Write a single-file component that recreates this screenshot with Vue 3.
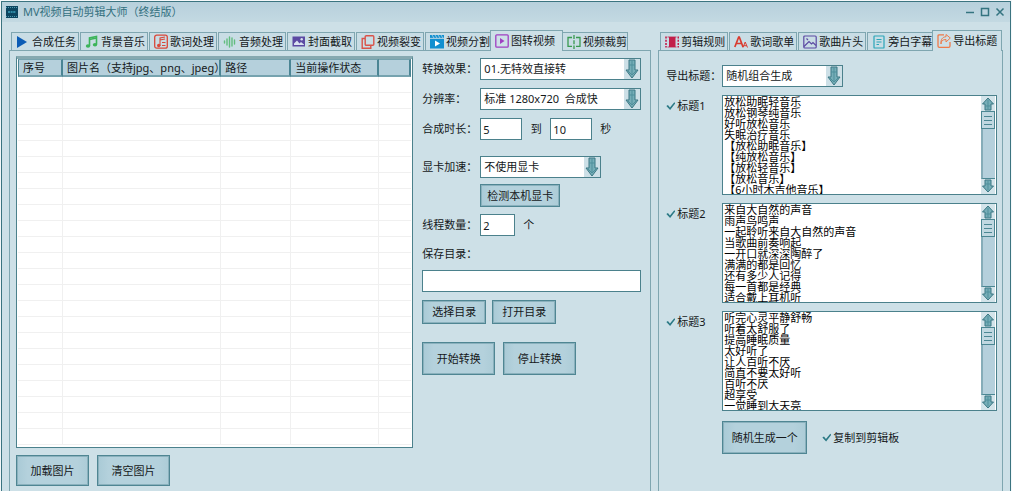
<script setup>
import { ref } from 'vue'

const leftTabs = [
  { name: '合成任务', icon: 'play' },
  { name: '背景音乐', icon: 'music' },
  { name: '歌词处理', icon: 'lyric' },
  { name: '音频处理', icon: 'audio' },
  { name: '封面截取', icon: 'cover' },
  { name: '视频裂变', icon: 'copy' },
  { name: '视频分割', icon: 'split' },
  { name: '图转视频', icon: 'convert' },
  { name: '视频裁剪', icon: 'crop' }
]
const rightTabs = [
  { name: '剪辑规则', icon: 'rule' },
  { name: '歌词歌单', icon: 'letters' },
  { name: '歌曲片头', icon: 'intro' },
  { name: '旁白字幕', icon: 'caption' },
  { name: '导出标题', icon: 'export' }
]
const icons = {
  play: '<path d="M1 2v12l10-6z" fill="#0b5cb5"/>',
  music: '<path d="M4.500 12V4l7-1.500v8" fill="none" stroke="#3cb45a" stroke-width="1.6"/><path d="M4.500 5.500l7-1.500" stroke="#3cb45a" stroke-width="1.500"/><ellipse cx="3" cy="12" rx="2.200" ry="1.800" fill="#3cb45a"/><ellipse cx="10" cy="10.800" rx="2.200" ry="1.800" fill="#3cb45a"/>',
  lyric: '<g fill="none" stroke="#d9483b"><rect x=".7" y="1.200" width="12.600" height="13" rx="2" stroke-width="1.300"/><path d="M6 12V4l5-1M6 6l5-1M8 8.500h3.500M8 11.500h3.500" stroke-width="1.100"/></g><circle cx="4.700" cy="11.500" r="1.700" fill="#d9483b"/>',
  audio: '<g stroke="#62bd7e" stroke-width="1.400" stroke-linecap="round"><path d="M1.500 7v2M4 5v6M6.500 3v10M9 4v8M11.500 6v4"/></g>',
  cover: '<rect x=".5" y="2.500" width="12.500" height="10" fill="#5c4aa3"/><path d="M2 11V9.500l3-3 2.500 3L9 8l3 2.500v.5z" fill="#d9e2f0"/><circle cx="9.700" cy="5.300" r="1.200" fill="#d9e2f0"/>',
  copy: '<g fill="none" stroke="#d9534a" stroke-width="1.400"><rect x="4.200" y="1.700" width="8.600" height="9.600" rx="1"/><path d="M4 4.500H1.200v9.800h8.600v-3"/></g>',
  split: '<rect x="0" y="4.500" width="14" height="10" fill="#108fd0"/><path d="M0 1h14v3H0z" fill="#108fd0"/><path d="M2 1l2 3M5 1l2 3M8 1l2 3M11 1l2 3M0 4.300h14" stroke="#cde0e7" stroke-width=".7"/><path d="M5 6.500v6l5-3z" fill="#fff"/>',
  convert: '<rect x=".8" y="1.800" width="12.400" height="12.400" rx="1" fill="none" stroke="#a03fc2" stroke-width="1.300"/><path d="M5 5v6l4.500-3z" fill="#a03fc2"/>',
  crop: '<g fill="none" stroke="#3a9a50" stroke-width="1.300"><path d="M5 3.500H1v8.800h4M9 3.500h4v8.800H9"/><path d="M7 1v14" stroke-dasharray="4 1.300"/></g>',
  rule: '<rect x="4" y="3" width="6.500" height="10" fill="#c21f4a"/><path d="M1 2.500v11M13.300 2.500v11" stroke="#c21f4a" stroke-width="1.600" stroke-dasharray="2 1.200"/><path d="M2.500 3h9M2.500 13h9" stroke="#c21f4a" stroke-width=".8"/>',
  letters: '<g fill="none" stroke="#d93a2e"><path d="M.8 13L4.700 3h.6L9 13M2.200 9.500h5.500" stroke-width="1.700"/><path d="M9 13.500l2.200-5.500 2.300 5.500M9.800 11.700h2.900" stroke-width="1"/></g>',
  intro: '<g fill="none" stroke="#5c4aa3" stroke-width="1.200"><rect x=".8" y="2" width="12.400" height="12" rx="1"/><path d="M1 12.500l5-5 2.500 2.500L10 8.500l3 3M3.500 4.500l1.500 1.500"/></g>',
  caption: '<g fill="none" stroke="#2aa5b8" stroke-width="1.200"><rect x="2" y="2" width="10" height="12" rx=".6"/><path d="M4.500 5.500h5M4.500 8h5M4.500 10.500h2.500"/></g>',
  export: '<g fill="none" stroke="#ee7a4a" stroke-width="1.300"><path d="M7 1.800H2.300Q1 1.800 1 3v10q0 1.300 1.300 1.300h9.400q1.300 0 1.300-1.300V9"/><path d="M4 11c0-3 1.500-4.500 5-4.500v2.500l4.300-4L9 1.500v2.200C5.500 4 3.500 6.500 4 11z" stroke-width="1"/></g>'
}

const columns = ['序号', '图片名（支持jpg、png、jpeg）', '路径', '当前操作状态', '']
const rowCount = 23

const effect = ref('01.无特效直接转')
const resolution = ref('1280x720')
const from = ref('5')
const to = ref('10')
const gpu = ref('不使用显卡')
const threads = ref('2')
const folder = ref('')
const mode = ref('随机组合生成')
const copyToClipboard = ref(true)

const titles = ref([
  {
    label: '标题1', on: true,
    text: '放松助眠轻音乐\n放松钢琴纯音乐\n好听放松音乐\n失眠治疗音乐\n【放松助眠音乐】\n【纯放松音乐】\n【放松轻音乐】\n【放松音乐】\n【6小时木吉他音乐】'
  },
  {
    label: '标题2', on: true,
    text: '来自大自然的声音\n雨声鸟鸣声\n一起聆听来自大自然的声音\n当歌曲前奏响起\n一开口就深深陶醉了\n满满的都是回忆\n还有多少人记得\n每一首都是经典\n适合戴上耳机听'
  },
  {
    label: '标题3', on: true,
    text: '听完心灵平静舒畅\n听着太舒服了\n提高睡眠质量\n太好听了\n让人百听不厌\n简直不要太好听\n百听不厌\n超享受\n一觉睡到大天亮'
  }
])
</script>

<template>
  <div class="window">
    <header class="titlebar">
      <svg class="logo" viewBox="0 0 12 12" aria-hidden="true">
        <rect width="12" height="12" fill="#0d4560" />
        <path d="M0 1.500h12M0 10.500h12" stroke="#4f9ab0" stroke-dasharray="1 1" />
        <path d="M2 6h8" stroke="#2f8aa5" stroke-width="2" stroke-dasharray="2 .6" />
      </svg>
      <h1>MV视频自动剪辑大师（终结版）</h1>
      <div class="controls">
        <button type="button" aria-label="最小化"><svg viewBox="0 0 10 10"><path d="M1 5.500h8" /></svg></button>
        <button type="button" aria-label="最大化"><svg viewBox="0 0 10 10"><path d="M1.500 1.500h7v7h-7z" /></svg></button>
        <button type="button" aria-label="关闭"><svg viewBox="0 0 10 10"><path d="M1.500 1.500l7 7M8.500 1.500l-7 7" /></svg></button>
      </div>
    </header>

    <main class="body">
      <section class="side">
        <nav class="tabs">
          <button v-for="tab in leftTabs" :key="tab.name" type="button" class="tab" :class="{ active: tab.icon === 'convert' }">
            <svg viewBox="0 0 14 16" aria-hidden="true" v-html="icons[tab.icon]"></svg>
            <span>{{ tab.name }}</span>
          </button>
        </nav>
        <div class="panel convert">
          <div class="files">
            <div class="grid">
              <table>
                <colgroup>
                  <col class="c-no"><col><col class="c-path"><col class="c-state"><col class="c-end">
                </colgroup>
                <thead>
                  <tr><th v-for="(c, i) in columns" :key="i">{{ c }}</th></tr>
                </thead>
                <tbody>
                  <tr v-for="r in rowCount" :key="r"><td v-for="(c, i) in columns" :key="i"></td></tr>
                </tbody>
              </table>
            </div>
            <div class="actions wide">
              <button type="button" class="btn">加载图片</button>
              <button type="button" class="btn">清空图片</button>
            </div>
          </div>

          <form class="form" @submit.prevent>
            <div class="row">
              <label for="effect">转换效果：</label>
              <div class="select">
                <select id="effect" v-model="effect"><option>01.无特效直接转</option></select>
                <svg viewBox="0 0 14 20" aria-hidden="true"><path d="M4 1h6v10h3L7 19 1 11h3z" /><path d="M7 2v14M4 6h6M3 12l4 4 4-4" /></svg>
              </div>
            </div>
            <div class="row">
              <label for="resolution">分辨率：</label>
              <div class="select">
                <select id="resolution" v-model="resolution"><option value="1280x720">标准 1280x720 &nbsp;合成快</option></select>
                <svg viewBox="0 0 14 20" aria-hidden="true"><path d="M4 1h6v10h3L7 19 1 11h3z" /><path d="M7 2v14M4 6h6M3 12l4 4 4-4" /></svg>
              </div>
            </div>
            <div class="row">
              <label for="from">合成时长：</label>
              <input id="from" v-model="from" class="field mid" type="text">
              <label for="to" class="word">到</label>
              <input id="to" v-model="to" class="field mid" type="text">
              <span class="unit">秒</span>
            </div>
            <div class="row gpu">
              <label for="gpu">显卡加速：</label>
              <div class="select short">
                <select id="gpu" v-model="gpu"><option>不使用显卡</option></select>
                <svg viewBox="0 0 14 20" aria-hidden="true"><path d="M4 1h6v10h3L7 19 1 11h3z" /><path d="M7 2v14M4 6h6M3 12l4 4 4-4" /></svg>
              </div>
            </div>
            <button type="button" class="btn detect">检测本机显卡</button>
            <div class="row threads">
              <label for="threads">线程数量：</label>
              <input id="threads" v-model="threads" class="field small" type="text">
              <span class="unit">个</span>
            </div>
            <label for="folder" class="folder-label">保存目录：</label>
            <input id="folder" v-model="folder" class="field" type="text">
            <div class="actions folder-actions">
              <button type="button" class="btn">选择目录</button>
              <button type="button" class="btn">打开目录</button>
            </div>
            <div class="actions run">
              <button type="button" class="btn">开始转换</button>
              <button type="button" class="btn">停止转换</button>
            </div>
          </form>
        </div>
      </section>

      <section class="side">
        <nav class="tabs">
          <button v-for="tab in rightTabs" :key="tab.name" type="button" class="tab" :class="{ active: tab.icon === 'export' }">
            <svg viewBox="0 0 14 16" aria-hidden="true" v-html="icons[tab.icon]"></svg>
            <span>{{ tab.name }}</span>
          </button>
        </nav>
        <div class="panel titles">
          <div class="line">
            <label for="mode" class="mode-label">导出标题：</label>
            <div class="select short">
              <select id="mode" v-model="mode"><option>随机组合生成</option></select>
              <svg viewBox="0 0 14 20" aria-hidden="true"><path d="M4 1h6v10h3L7 19 1 11h3z" /><path d="M7 2v14M4 6h6M3 12l4 4 4-4" /></svg>
            </div>
          </div>
          <div v-for="t in titles" :key="t.label" class="line">
            <label class="check"><input v-model="t.on" type="checkbox">{{ t.label }}</label>
            <div class="memo">
              <textarea v-model="t.text" :aria-label="t.label" spellcheck="false"></textarea>
              <div class="scroll" aria-hidden="true">
                <svg viewBox="0 0 14 14"><path d="M7 1l5.500 6H10v6H4V7H1.500z" /><path d="M7 3v9M4 9h6" /></svg>
                <div class="thumb"><i></i><i></i><i></i></div>
                <div class="track"></div>
                <svg viewBox="0 0 14 14"><path d="M7 13l5.500-6H10V1H4v6H1.500z" /><path d="M7 11V2M4 5h6" /></svg>
              </div>
            </div>
          </div>
          <div class="line generate">
            <button type="button" class="btn">随机生成一个</button>
            <label class="check"><input v-model="copyToClipboard" type="checkbox">复制到剪辑板</label>
          </div>
        </div>
      </section>
    </main>
  </div>
</template>

<style>
body { margin: 0; background: #f4f8fa; }
</style>

<style scoped>
* { box-sizing: border-box; }
.window {
  --edge: #4b818c;
  --soft: #7fa6b0;
  --bg: #cde0e7;
  display: flex;
  flex-direction: column;
  min-height: calc(100vh - 1px);
  margin: 1px 1px 0;
  border: 1px solid #3b7480;
  border-bottom: 0;
  background: var(--bg);
  color: #14181a;
  font: 11px/16px "Noto Sans", "Noto Sans CJK SC", sans-serif;
}
button, input, select, textarea { font: inherit; color: inherit; margin: 0; }

.titlebar {
  display: flex;
  align-items: center;
  height: 20px;
  padding: 0 5px 0 4px;
  background: linear-gradient(#b7d0dc, #c3d9e2);
}
.logo { width: 12px; height: 12px; }
h1 { flex: 1; margin: 0 0 0 5px; color: #33707e; font: inherit; }
.controls { display: flex; gap: 5px; }
.controls button { width: 10px; height: 10px; padding: 0; border: 0; background: none; }
.controls svg { display: block; width: 10px; height: 10px; fill: none; stroke: #347480; stroke-width: 1.5; }

.body {
  flex: 1;
  display: grid;
  grid-template-columns: 643fr 345fr;
  gap: 7px;
  padding: 8px 7px 0;
}
.side { display: flex; flex-direction: column; min-width: 0; }
.tabs { display: flex; align-items: flex-end; gap: 1px; height: 20px; padding: 0 0 0 2px; }
.tab {
  display: flex;
  align-items: center;
  gap: 2px;
  width: 68px;
  height: 18px;
  padding: 0 0 0 4px;
  border: 1px solid var(--soft);
  border-bottom: 0;
  background: #c9dde5;
  white-space: nowrap;
}
.tab svg { flex: none; width: 14px; height: 16px; }
.tab.active {
  position: relative;
  width: 73px;
  height: 21px;
  margin: 0 -2px -1px -4px;
  padding-bottom: 1px;
  background: var(--bg);
}
.tab:last-child { width: 66px; }
.tab.active:last-child { width: 70px; margin-right: 0; }
.panel { flex: 1; border: 1px solid var(--soft); border-bottom: 0; }

.convert { display: flex; gap: 9px; padding: 5px 9px 0 6px; }
.files { flex: 1; min-width: 0; }
.grid { border: 1px solid var(--edge); border-top: 3px solid #86a9b1; background: #fff; padding: 0 1px 2px; }
table { width: 100%; border-collapse: separate; border-spacing: 0; table-layout: fixed; }
.c-no { width: 45px; }
.c-path { width: 70px; }
.c-state { width: 88px; }
.c-end { width: 32px; }
th {
  height: 18px;
  padding: 0 0 0 4px;
  border: 1px solid #76a3af;
  border-width: 1px 2px 2px 0;
  border-color: #76a3af #4b8594;
  background: #b5d0dc;
  font-weight: 400;
  line-height: 15px;
  text-align: left;
  white-space: nowrap;
}
th:first-child { border-left-width: 1px; }
td { height: 16px; padding: 0; border: 1px solid #f0f0f0; border-width: 0 1px 1px 0; }
td:last-child { border-right: 0; }

.btn {
  padding: 0;
  border: 1px solid #4f8693;
  box-shadow: inset 0 0 0 1px #8ab1bd;
  background: linear-gradient(90deg, #a9cad6, #b4d1dc 15%, #b4d1dc 85%, #acccd7);
}
.actions { display: flex; }
.wide { gap: 8px; margin-top: 7px; }
.wide .btn { width: 73px; height: 31px; }

.form { display: flex; flex-direction: column; width: 219px; padding-top: 2px; }
.row { display: flex; align-items: center; height: 22px; margin-bottom: 8px; }
.row > label:first-child { width: 58px; flex: none; white-space: nowrap; }
.select { position: relative; flex: 1; height: 22px; }
.select.short { flex: none; width: 121px; }
.select select {
  appearance: none;
  display: block;
  width: 100%;
  height: 100%;
  padding: 0 18px 0 3px;
  border: 1px solid var(--edge);
  border-radius: 0;
  background: linear-gradient(#cde0e7, #cde0e7) right center / 16px 100% no-repeat #fff;
}
.select svg { position: absolute; top: 1px; right: 2px; width: 14px; height: 20px; pointer-events: none; }
.select svg path, .scroll svg path { fill: #76aeb8; stroke: #3a7783; }
.select svg path + path, .scroll svg path + path { fill: none; stroke: #4f8f9b; }
.field { width: 100%; height: 22px; padding: 0 2px; border: 1px solid var(--edge); border-radius: 0; background: #fff; }
.mid { width: 42px; }
.small { width: 35px; }
.word { width: 28px; text-align: center; }
.unit { margin-left: 8px; }
.gpu { margin: 8px 0 6px; }
.detect { width: 80px; height: 23px; margin: 0 0 7px 58px; }
.folder-label { margin: 2px 0 8px; }
.folder-actions { gap: 6px; margin-top: 8px; }
.folder-actions .btn { width: 64px; height: 24px; }
.run { gap: 8px; margin-top: 18px; }
.run .btn { width: 73px; height: 33px; }

.titles { display: flex; flex-direction: column; gap: 8px; padding: 14px 5px 0 7px; }
.line { display: flex; align-items: flex-start; }
.mode-label { width: 56px; line-height: 22px; white-space: nowrap; }
.line > .check { width: 56px; margin-top: 3px; }
.check { display: flex; align-items: center; gap: 2px; white-space: nowrap; }
.check input { appearance: none; width: 9px; height: 9px; }
.check input:checked { background: #2c7a86; clip-path: polygon(0 50%, 18% 40%, 40% 66%, 88% 8%, 100% 20%, 42% 94%); }
.memo { flex: 1; display: flex; height: 100px; padding: 0 1px; border: 1px solid var(--edge); background: #fff; }
.memo textarea {
  flex: 1;
  min-width: 0;
  padding: 0;
  border: 0;
  resize: none;
  overflow: hidden;
  background: none;
  color: #000;
  font-family: "Noto Sans CJK SC", sans-serif;
  line-height: 11px;
  white-space: pre;
}
.scroll { display: flex; flex-direction: column; width: 14px; padding: 1px 0; background: #d3e4ea; }
.scroll svg { flex: none; width: 14px; height: 14px; }
.thumb {
  display: flex;
  flex-direction: column;
  justify-content: center;
  gap: 3px;
  height: 18px;
  padding: 0 2px;
  border: 1px solid #4b8793;
  background: #c0d8e1;
}
.thumb i { height: 1px; background: #4b8793; }
.track { flex: 1; border-left: 2px solid #86adb9; border-bottom: 1px solid #4b8793; background: #b5d0dc; }
.generate { align-items: center; margin: 2px 0 0 56px; }
.generate .btn { width: 85px; height: 33px; }
.line.generate .check { width: auto; margin: 0 0 0 15px; }
</style>
